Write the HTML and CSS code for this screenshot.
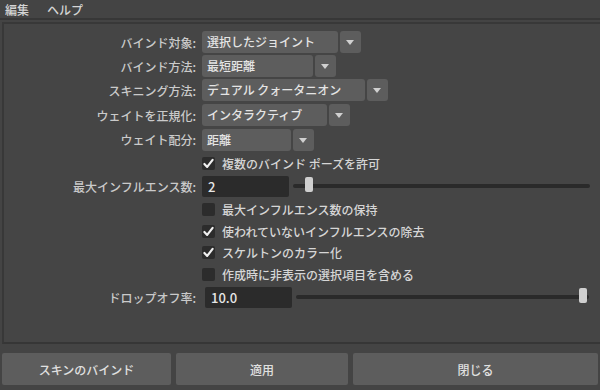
FILE: index.html
```html
<!DOCTYPE html>
<html>
  <head>
  <meta charset="utf-8">
  <link rel="stylesheet" href="styles.css">
  </head>
  <body>
    <div class="menubar">
      <span>編集</span>
      <span>ヘルプ</span>
    </div>
    <div class="panel">
      <div class="form">
        <label>バインド対象:</label>
        <div class="combo"><div class="value w1">選択したジョイント</div><div class="arrow"></div></div>

        <label>バインド方法:</label>
        <div class="combo"><div class="value w2">最短距離</div><div class="arrow"></div></div>

        <label>スキニング方法:</label>
        <div class="combo"><div class="value w3">デュアル クォータニオン</div><div class="arrow"></div></div>

        <label>ウェイトを正規化:</label>
        <div class="combo"><div class="value w4">インタラクティブ</div><div class="arrow"></div></div>

        <label>ウェイト配分:</label>
        <div class="combo"><div class="value w5">距離</div><div class="arrow"></div></div>

        <span></span>
        <div class="check"><span class="box on"><svg viewBox="0 0 12 12"><path d="M2.2 6.4 L4.8 9.2 L9.8 2.6"/></svg></span>複数のバインド ポーズを許可</div>

        <label>最大インフルエンス数:</label>
        <div class="slider-row">
          <div class="field">2</div>
          <div class="track long"><div class="thumb" style="left: 12px"></div></div>
        </div>

        <span></span>
        <div class="check"><span class="box"></span>最大インフルエンス数の保持</div>

        <span></span>
        <div class="check"><span class="box on"><svg viewBox="0 0 12 12"><path d="M2.2 6.4 L4.8 9.2 L9.8 2.6"/></svg></span>使われていないインフルエンスの除去</div>

        <span></span>
        <div class="check"><span class="box on"><svg viewBox="0 0 12 12"><path d="M2.2 6.4 L4.8 9.2 L9.8 2.6"/></svg></span>スケルトンのカラー化</div>

        <span></span>
        <div class="check"><span class="box"></span>作成時に非表示の選択項目を含める</div>

        <label>ドロップオフ率:</label>
        <div class="slider-row drop">
          <div class="field">10.0</div>
          <div class="track"><div class="thumb" style="left: 283px"></div></div>
        </div>
      </div>
    </div>
    <div class="buttons">
      <button class="b1">スキンのバインド</button>
      <button class="b2">適用</button>
      <button class="b3">閉じる</button>
    </div>
  </body>
</html>
```

FILE: styles.css
```css
html, body {
  margin: 0;
  padding: 0;
  width: 600px;
  height: 390px;
  overflow: hidden;
  background: #444444;
  color: #cfcfcf;
  font-family: "Noto Sans CJK JP", "Noto Sans", sans-serif;
  font-size: 12px;
  font-weight: 500;
}
.menubar {
  height: 20px;
  display: flex;
  align-items: center;
  gap: 18px;
  padding-left: 5px;
  color: #d4d4d4;
  border-bottom: 2px solid #373737;
  box-sizing: border-box;
}
.panel {
  margin: 2px 0 0 2px;
  height: 322px;
  box-sizing: border-box;
  border-top: 2px solid #383838;
  border-left: 2px solid #383838;
  border-bottom: 2px solid #363636;
  background: #454545;
}
.form {
  display: grid;
  grid-template-columns: 192px 1fr;
  grid-template-rows: 24px 24px 24.5px 25px 24px 23px 23.5px 22.5px 21.5px 21.5px 22px 23px;
  column-gap: 6px;
  padding-top: 6px;
  align-items: center;
}
.form label {
  text-align: right;
  color: #cacaca;
}
.combo {
  display: flex;
  gap: 2px;
  height: 22px;
}
.value {
  background: #5d5d5d;
  border-radius: 3px;
  padding-left: 5px;
  line-height: 22px;
  color: #e4e4e4;
  box-sizing: border-box;
}
.w1 { width: 136px; }
.w2 { width: 111px; }
.w3 { width: 163px; }
.w4 { width: 125px; }
.w5 { width: 89px; }
.arrow {
  width: 21px;
  background: #5d5d5d;
  border-radius: 3px;
  position: relative;
}
.arrow::after {
  content: "";
  position: absolute;
  left: 6px;
  top: 9px;
  border-left: 4.5px solid transparent;
  border-right: 4.5px solid transparent;
  border-top: 5px solid #d0d0d0;
}
.check {
  display: flex;
  align-items: center;
  gap: 7px;
  color: #d6d6d6;
}
.box {
  width: 13px;
  height: 13px;
  background: #2c2c2c;
  border-radius: 2px;
  flex: none;
  display: flex;
}
.box svg {
  width: 13px;
  height: 13px;
}
.box path {
  fill: none;
  stroke: #f0f0f0;
  stroke-width: 2;
  stroke-linecap: round;
  stroke-linejoin: round;
}
.slider-row {
  display: flex;
  align-items: center;
  gap: 4px;
}
.slider-row.drop {
  margin-left: 3px;
  gap: 4px;
}
.field {
  width: 87px;
  height: 21px;
  line-height: 21px;
  background: #2b2b2b;
  border-radius: 2px;
  padding-left: 6px;
  box-sizing: border-box;
  color: #e6e6e6;
  font-size: 13px;
}
.track {
  position: relative;
  width: 293px;
  height: 4px;
  background: #2a2a2a;
  border-radius: 2px;
}
.track.long {
  width: 297px;
}
.thumb {
  position: absolute;
  top: -7px;
  width: 8px;
  height: 15px;
  background: #cfcfcf;
  border-radius: 2px;
}
.buttons {
  display: flex;
  gap: 5px;
  padding: 9px 2px 0 2px;
}
.buttons button {
  height: 32px;
  border: none;
  border-radius: 2px;
  background: #5d5d5d;
  color: #e0e0e0;
  font-family: inherit;
  font-size: 12px;
  font-weight: 500;
  padding: 0;
}
.b1 { width: 169px; }
.b2 { width: 172px; }
.b3 { flex: 1; }
```
